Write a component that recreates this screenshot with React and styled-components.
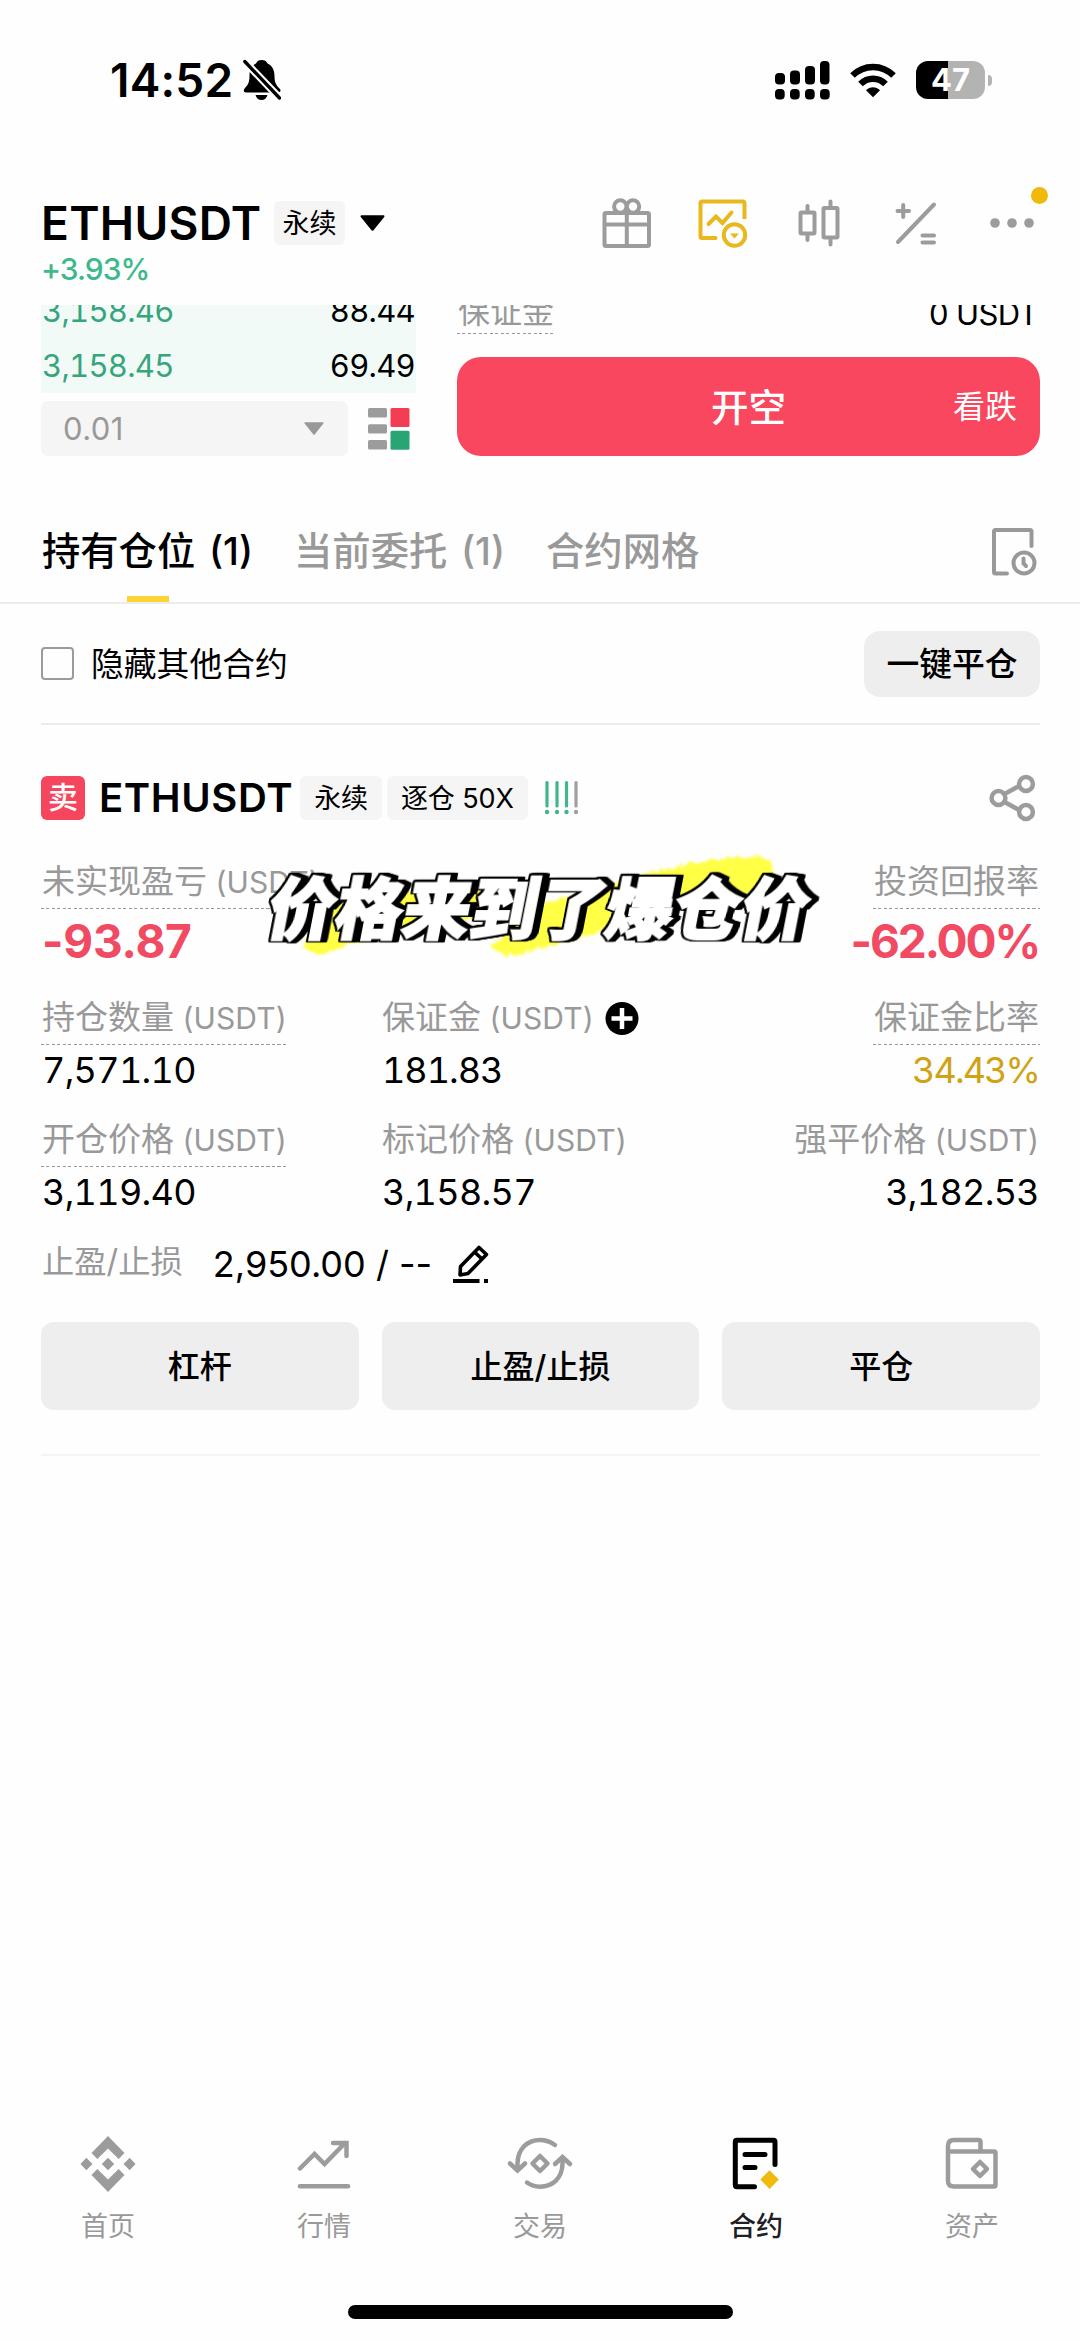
import React from "react";
import styled, { createGlobalStyle } from "styled-components";

const GlobalStyle = createGlobalStyle`
  * { box-sizing: border-box; }
  body {
    margin: 0;
    background: #fefefe;
    color: #000;
    font-family: Inter, "Noto Sans CJK SC", sans-serif;
  }
  svg { display: block; flex: none; }
`;

const colors = {
  gray: "#999999",
  red: "#f6465d",
  gold: "#f0b90b",
  chip: "#f5f5f5",
  button: "#eeeeee",
  line: "#ececec",
};

const Page = styled.div`
  width: 1080px;
  height: 2341px;
  display: flex;
  flex-direction: column;
  overflow: hidden;
`;

const Latin = styled.span`
  font-size: 30px;
  letter-spacing: 0.1px;
  line-height: 1;
`;

/* Status bar */
const StatusBar = styled.div`
  height: 160px;
  padding: 0 88px 0 110px;
  display: flex;
  align-items: center;
  justify-content: space-between;
`;

const StatusGroup = styled.div`
  display: flex;
  align-items: center;
  gap: ${props => props.$gap}px;
`;

const Clock = styled.span`
  font-size: 46px;
  font-weight: 600;
  line-height: 60px;
  letter-spacing: 0.2px;
`;

const Battery = styled.div`
  width: 69px;
  height: 38px;
  border-radius: 12px;
  background: linear-gradient(90deg, #000 47%, #b3b3b3 47%);
  color: #fff;
  font-size: 31px;
  font-weight: 700;
  line-height: 38px;
  text-align: center;
`;

const BatteryCap = styled.div`
  width: 4px;
  height: 11px;
  margin-left: 3px;
  border-radius: 0 5px 5px 0;
  background: #b3b3b3;
`;

/* Header */
const Header = styled.header`
  height: 145px;
  padding: 33px 20px 0 41px;
`;

const HeaderRow = styled.div`
  height: 60px;
  display: flex;
  align-items: center;
`;

const Symbol = styled.h1`
  margin: 0 ${props => props.$gap}px 0 0;
  font-size: ${props => props.$size}px;
  font-weight: 600;
  line-height: 1;
  letter-spacing: ${props => props.$track}px;
`;

const Chip = styled.span`
  height: 44px;
  margin-right: ${props => props.$gap}px;
  padding: 0 ${props => props.$pad || 14}px;
  border-radius: 6px;
  background: ${colors.chip};
  display: flex;
  align-items: center;
  font-size: 27px;
  line-height: 1;
  letter-spacing: -0.1px;
  white-space: pre;
`;

const HeaderIcons = styled.div`
  margin-left: auto;
  display: grid;
  grid-template-columns: repeat(5, 96.3px);
  align-items: center;
  justify-items: center;
`;

const MoreWrap = styled.div`
  position: relative;
`;

const NoticeDot = styled.i`
  position: absolute;
  right: -13px;
  top: -22px;
  width: 17px;
  height: 17px;
  border-radius: 50%;
  background: ${colors.gold};
`;

const Change = styled.div`
  color: #3db98b;
  font-size: 30px;
  font-weight: 500;
  line-height: 33px;
  letter-spacing: -1px;
`;

/* Order area */
const OrderArea = styled.section`
  height: 151px;
  padding: 0 40px 0 41px;
  display: flex;
  gap: 41px;
  overflow: hidden;
`;

const BookColumn = styled.div`
  width: 375px;
`;

const Book = styled.div`
  height: 88px;
  margin-bottom: 8px;
  background: #f2faf7;
  display: flex;
  flex-direction: column;
  justify-content: flex-end;
  overflow: hidden;
`;

const BookRow = styled.div`
  flex: none;
  height: 55px;
  padding: 0 1px;
  display: flex;
  justify-content: space-between;
  align-items: center;
  font-size: 31px;
  font-variant-numeric: tabular-nums;
  line-height: 1;
  letter-spacing: -0.7px;

  span:first-child { color: #35a57b; }
`;

const StepRow = styled.div`
  display: flex;
  align-items: center;
  justify-content: space-between;
  padding-right: 6px;
`;

const StepSelect = styled.div`
  width: 307px;
  height: 55px;
  padding: 0 24px 0 22px;
  border-radius: 7px;
  background: ${colors.chip};
  color: ${colors.gray};
  display: flex;
  align-items: center;
  justify-content: space-between;
  font-size: 31px;
  letter-spacing: 0.4px;
`;

const OrderColumn = styled.div`
  flex: 1;
`;

const MarginRow = styled.div`
  height: 52px;
  padding: 0 2px 23px 0;
  display: flex;
  align-items: flex-end;
  justify-content: space-between;
`;

const Label = styled.span`
  height: ${props => props.$height || 52}px;
  padding: 0 1px 3px;
  display: inline-flex;
  align-items: center;
  color: ${colors.gray};
  font-size: ${props => props.$size || 33}px;
  line-height: 1;
  white-space: pre;
  background: ${props => props.$dotted
    ? "repeating-linear-gradient(90deg, #999 0 3px, transparent 3px 5.5px) left bottom / 100% 1px no-repeat"
    : "none"};
`;

const MarginValue = styled.span`
  font-size: 31px;
  line-height: 41px;
  letter-spacing: -0.6px;
`;

const SellButton = styled.button`
  width: 100%;
  height: 99px;
  padding: 0 23px 5px;
  border: 0;
  border-radius: 24px;
  background: #f8475e;
  color: #fff;
  font-family: inherit;
  display: grid;
  grid-template-columns: 1fr auto 1fr;
  align-items: center;
  font-size: 37.500px;
  font-weight: 500;

  small {
    grid-column: 3;
    justify-self: end;
    font-size: 32px;
    font-weight: 400;
  }
  span { grid-column: 2; }
`;

/* Tabs */
const Tabs = styled.nav`
  height: 148px;
  padding: 65px 43px 0 42px;
  border-bottom: 2px solid ${colors.line};
  display: flex;
  gap: 41px;

  svg { margin: 6px 0 0 auto; }
`;

const Tab = styled.div`
  display: flex;
  flex-direction: column;
  align-items: center;
  color: ${props => props.$active ? "#000" : colors.gray};
  font-size: 38.300px;
  font-weight: 500;
  line-height: 60px;
  word-spacing: 3.5px;
  white-space: pre;

  &::after {
    content: "";
    width: 42px;
    height: 7px;
    margin-top: 15px;
    background: ${props => props.$active ? "#fcd535" : "transparent"};
  }
`;

const FilterRow = styled.div`
  height: 121px;
  margin: 0 40px 0 41px;
  border-bottom: 2px solid ${colors.line};
  display: flex;
  align-items: center;
  font-size: 32.800px;
`;

const FilterText = styled.span`
  padding-bottom: 4px;
`;

const Checkbox = styled.span`
  width: 33px;
  height: 33px;
  margin-right: 17px;
  border: 2px solid #9b9b9b;
  border-radius: 4px;
`;

const CloseAll = styled.button`
  width: 176px;
  height: 66px;
  margin-left: auto;
  padding: 0 0 4px;
  border: 0;
  border-radius: 16px;
  background: ${colors.button};
  color: #000;
  font: inherit;
  font-weight: 500;
`;

/* Position card */
const Position = styled.section`
  margin: 0 40px 0 41px;
  padding: 51px 0 44px;
  border-bottom: 2px solid #f3f5f5;
  position: relative;
`;

const PositionHead = styled.div`
  height: 44px;
  margin-bottom: 37px;
  padding-right: 4px;
  display: flex;
  align-items: center;

  svg:last-child { margin-left: auto; }
`;

const Side = styled.span`
  width: 44px;
  height: 44px;
  margin-right: 14px;
  border-radius: 6px;
  background: ${colors.red};
  color: #fff;
  font-size: 30px;
  font-weight: 500;
  line-height: 42px;
  text-align: center;
`;

const MetricRow = styled.div`
  display: grid;
  grid-template-columns: 340px 1fr auto;
  margin-bottom: 19px;
`;

const Metric = styled.div`
  display: flex;
  flex-direction: column;
  align-items: ${props => props.$end ? "flex-end" : "flex-start"};
`;

const LabelLine = styled.div`
  display: flex;
  align-items: center;
  gap: 10px;
`;

const Value = styled.div`
  padding: 0 1px;
  font-size: 36px;
  font-variant-numeric: tabular-nums;
  line-height: 51px;
  letter-spacing: ${props => props.$track ?? -0.7}px;
  color: ${props => props.$color || "#000"};
`;

const BigValue = styled(Value)`
  font-size: 46px;
  font-weight: 700;
  font-variant-numeric: normal;
  line-height: 65px;
  color: #f04b62;
`;

const StopRow = styled.div`
  height: 92px;
  margin-top: -19px;
  display: flex;
  align-items: center;
`;

const StopValue = styled.span`
  margin: 0 20px 0 29px;
  font-size: 36px;
  line-height: 1;
  white-space: pre;
`;

const Actions = styled.div`
  margin-top: 12px;
  display: grid;
  grid-template-columns: repeat(3, 1fr);
  gap: 23px;
`;

const Action = styled.button`
  height: 88px;
  padding: 0 0 5px;
  border: 0;
  border-radius: 13px;
  background: ${colors.button};
  color: #000;
  font-family: inherit;
  font-size: 32px;
  font-weight: 500;
`;

/* Sticker caption laid over the card */
const Caption = styled.div`
  position: absolute;
  left: 225px;
  top: 120px;
  width: 574px;
  height: 120px;
`;

const Brush = styled.svg`
  position: absolute;
  left: 18px;
  top: 0;
`;

const CaptionText = styled.div`
  position: relative;
  margin-top: 15px;
  padding-left: 4px;
  color: #fff;
  font-family: "Noto Sans CJK SC", sans-serif;
  font-size: 67px;
  font-weight: 900;
  line-height: 90px;
  letter-spacing: 0.6px;
  white-space: nowrap;
  transform: skewX(-11deg);
  -webkit-text-stroke: 2px #fff;
  filter: drop-shadow(1.1px 0 0 #000) drop-shadow(-1.1px 0 0 #000)
    drop-shadow(0 1.1px 0 #000) drop-shadow(0 -1.1px 0 #000)
    drop-shadow(2px 0 0 #000) drop-shadow(4px 0 0 #000);
`;

/* Bottom navigation */
const BottomNav = styled.nav`
  margin-top: auto;
  display: grid;
  grid-template-columns: repeat(5, 1fr);
`;

const NavItem = styled.div`
  display: flex;
  flex-direction: column;
  align-items: center;
  gap: 13px;
  color: ${props => props.$active ? "#1e2026" : colors.gray};
  font-size: 27px;
  font-weight: ${props => props.$active ? 500 : 400};
  line-height: 40px;
`;

const HomeIndicator = styled.div`
  width: 385px;
  height: 14px;
  margin: 58px auto 22px;
  border-radius: 7px;
  background: #000;
`;

const BellOff = () => (
  <svg width="38" height="42" viewBox="0 0 38 42">
    <path fill="#000" d="M18.500 1C21.500 1 23.500 2 24.500 4.500C29.500 6.500 31.500 11.500 31.500 17C31.500 23 33 26 36.500 29.500C38.500 31.500 37.500 33.500 35 33.500H3C.5 33.500 0 31 2 29C5 26 6.500 23 6.500 17C6.500 11.500 8 6.500 13 4.500C14 2 16 1 18.500 1ZM12.500 36H24.500C23.700 39 21.500 41 18.500 41S13.300 39 12.500 36Z" />
    <path d="M-1 -.5L39 41.500" stroke="#fefefe" strokeWidth="7.500" />
    <path d="M1.800 2.500L36.500 39" stroke="#000" strokeWidth="3.300" strokeLinecap="round" />
  </svg>
);

const Signal = () => (
  <svg width="55" height="39" viewBox="0 0 55 39">
    <rect x="0" y="12" width="10" height="11.500" rx="4" />
    <rect x="15" y="9.500" width="10" height="14" rx="4" />
    <rect x="30" y="5" width="10" height="18.500" rx="4" />
    <rect x="45" y="0" width="9.500" height="23.500" rx="4" />
    {[0, 15, 30, 45].map(x => <rect key={x} x={x} y="28" width="9.700" height="10.500" rx="4" />)}
  </svg>
);

const Wifi = () => (
  <svg width="46" height="36" viewBox="0 0 46 36" fill="none" stroke="#000" strokeWidth="6.500">
    <path d="M2.500 13.500C14 2 32 2 43.500 13.500" />
    <path d="M10.500 22C17.500 15 28.500 15 35.500 22" />
    <path d="M16 28.200C20 24.300 26 24.300 30 28.200L23 35.300Z" fill="#000" stroke="none" />
  </svg>
);

const Triangle = ({ width, height, color }) => (
  <svg width={width} height={height} viewBox="0 0 24 15" preserveAspectRatio="none">
    <path d="M1.500 1.200H22.500L12 13.800Z" fill={color} stroke={color} strokeWidth="2" strokeLinejoin="round" />
  </svg>
);

const Gift = () => (
  <svg width="50" height="52" viewBox="0 0 50 52" fill="none" stroke="#9c9c9c" strokeWidth="4">
    <rect x="2.500" y="16" width="44.500" height="33" rx="1.500" />
    <path d="M2.500 27.500H47M24.800 16V49" />
    <circle cx="18.300" cy="9.500" r="6.200" />
    <circle cx="31" cy="9.500" r="6.200" />
  </svg>
);

const ChartCoin = () => (
  <svg width="50" height="50" viewBox="0 0 50 50" fill="none" stroke="#e9b81e" strokeWidth="4" strokeLinecap="round">
    <path d="M46.500 21V5Q46.500 3.500 45 3.500H4Q2.500 3.500 2.500 5V38.500Q2.500 40 4 40H17.500" strokeLinecap="butt" />
    <path d="M17 40H17.500M10.500 26L18 18.500L24.500 25L33.500 14.500" />
    <circle cx="36.500" cy="37" r="10.700" />
    <path d="M32 35.500H41L36.500 40.500Z" fill="#e9b81e" stroke="none" />
  </svg>
);

const Candles = () => (
  <svg width="42" height="48" viewBox="0 0 42 48" fill="none" stroke="#9c9c9c" strokeWidth="4" strokeLinecap="round">
    <rect x="2.500" y="13.500" width="14" height="21" rx="1" />
    <rect x="25.500" y="9" width="14" height="29.500" rx="1" />
    <path d="M9.500 7V13M9.500 35V41M32.500 2.500V9M32.500 39V45.500" />
  </svg>
);

const PlusSlash = () => (
  <svg width="42" height="44" viewBox="0 0 42 44" fill="none" stroke="#9c9c9c" strokeWidth="4" strokeLinecap="round">
    <path d="M3 41L39 3.500M2.500 10H14M8.200 4V16M27.500 34.500H39M27.500 41.500H39" />
  </svg>
);

const Dots = () => (
  <svg width="46" height="28" viewBox="0 0 46 28" fill="#9c9c9c">
    <circle cx="6" cy="14" r="4.800" />
    <circle cx="23" cy="14" r="4.800" />
    <circle cx="40" cy="14" r="4.800" />
  </svg>
);

const BookLayout = () => (
  <svg width="42" height="42" viewBox="0 0 42 42">
    <g fill="#9c9c9c">
      <rect x="0" y="0" width="19" height="9.500" rx="1.500" />
      <rect x="0" y="16.300" width="19" height="9.300" rx="1.500" />
      <rect x="0" y="32" width="19" height="9.500" rx="1.500" />
    </g>
    <rect x="22.500" y="0" width="19" height="19" rx="1.500" fill="#f33d54" />
    <rect x="22.500" y="22.800" width="19" height="19" rx="1.500" fill="#28a575" />
  </svg>
);

const History = () => (
  <svg width="46" height="50" viewBox="0 0 46 50" fill="none" stroke="#999" strokeWidth="4" strokeLinecap="round">
    <path d="M40.500 19V4.500Q40.500 3 39 3H4.500Q3 3 3 4.500V45Q3 46.500 4.500 46.500H16" />
    <circle cx="33" cy="36" r="10.500" />
    <path d="M32.500 31.500V36.500L35 39" />
  </svg>
);

const Risk = () => (
  <svg width="34" height="34" viewBox="0 0 34 34">
    {[2, 12, 21.5, 31].map((x, i) => (
      <g key={x} fill={i < 3 ? "#43b58b" : "#a0a0a0"}>
        <rect x={x - 1.6} y="0" width="3.200" height="26.500" rx="1.500" />
        <circle cx={x} cy="31" r="2.200" />
      </g>
    ))}
  </svg>
);

const Share = () => (
  <svg width="47" height="48" viewBox="0 0 47 48" fill="none" stroke="#9c9c9c" strokeWidth="4.500">
    <path d="M15.500 20L31 11.500M15.500 28L31 36.500" />
    <circle cx="9.500" cy="24" r="6.900" />
    <circle cx="37" cy="10" r="6.900" />
    <circle cx="37" cy="38" r="6.900" />
  </svg>
);

const AddCircle = () => (
  <svg width="34" height="34" viewBox="0 0 34 34">
    <circle cx="17" cy="16.500" r="16.500" />
    <path d="M17 6V27M6.500 16.500H27.500" stroke="#fff" strokeWidth="4.500" />
  </svg>
);

const Edit = () => (
  <svg width="38" height="38" viewBox="0 0 38 38" fill="none" stroke="#000" strokeWidth="3.600" strokeLinejoin="round">
    <path d="M8 30L8.500 21.500L27 2.500L34.500 9.500L16 28.500Z" />
    <path d="M22.500 7L30 14" />
    <path d="M1 36H27.500M32 36H36" strokeWidth="3.800" />
  </svg>
);

const navIcons = {
  home: (
    <svg width="56" height="60" viewBox="0 0 56 60" fill="#9c9c9c">
      <path d="M28 2L44.500 19L38.700 25L28 14.500L17.300 25L11.500 19ZM28 58L44.500 41L38.700 35L28 45.500L17.300 35L11.500 41Z" />
      <path d="M28 23.800L34.200 30L28 36.200L21.800 30ZM6.300 23.800L12.500 30L6.300 36.200L.5 30ZM49.700 23.800L55.500 30L49.700 36.200L43.500 30Z" />
    </svg>
  ),
  market: (
    <svg width="54" height="60" viewBox="0 0 54 60" fill="none" stroke="#9c9c9c" strokeWidth="4.500" strokeLinecap="round">
      <path d="M3 34.500L17.500 20L27.500 30L48 9M36 9H49.500V22" />
      <path d="M3 52.300H51" />
    </svg>
  ),
  trade: (
    <svg width="68" height="60" viewBox="0 0 68 60" fill="none" stroke="#9c9c9c" strokeWidth="4.500" strokeLinecap="round">
      <path d="M11.500 36V29C12 15 21 6 34 6Q42 6 49 11" />
      <path d="M4 29.500L11.500 36.500L19 29.500" />
      <path d="M56.500 24V30C56 44 47 52.700 34 52.700Q27 52.700 21 48.500" />
      <path d="M49 30L56.500 23L64 30" />
      <path d="M34 22L41.500 29.500L34 37L26.500 29.500Z" strokeLinejoin="round" />
    </svg>
  ),
  futures: (
    <svg width="48" height="60" viewBox="0 0 48 60" fill="none" stroke="#000" strokeWidth="5" strokeLinecap="round">
      <path d="M43 30.500V8Q43 6.300 41.300 6.300H5Q3.300 6.300 3.300 8V51Q3.300 52.700 5 52.700H22.500" />
      <path d="M13 20.500H33M13 33.500H23" />
      <path d="M37.500 36.300L46.800 45.500L37.500 55L28.300 45.500Z" fill="#f0b90b" stroke="none" />
    </svg>
  ),
  assets: (
    <svg width="54" height="60" viewBox="0 0 54 60" fill="none" stroke="#9c9c9c" strokeWidth="4.500">
      <path d="M35.500 17V8Q35.500 6 33.500 6H9Q3 6 3 12V47Q3 52.500 9 52.500H49Q50.500 52.500 50.500 51V19Q50.500 17.500 49 17.500H3" />
      <path d="M35 28L42 35L35 42L28 35Z" strokeLinejoin="round" />
    </svg>
  ),
};

const navItems = [
  { icon: "home", text: "首页" },
  { icon: "market", text: "行情" },
  { icon: "trade", text: "交易" },
  { icon: "futures", text: "合约", active: true },
  { icon: "assets", text: "资产" },
];

const Unit = () => <Latin>{" (USDT)"}</Latin>;

export default function App() {
  return (
    <Page>
      <GlobalStyle />
      <StatusBar>
        <StatusGroup $gap={10}>
          <Clock>14:52</Clock>
          <BellOff />
        </StatusGroup>
        <StatusGroup $gap={20}>
          <Signal />
          <Wifi />
          <StatusGroup $gap={0}>
            <Battery>47</Battery>
            <BatteryCap />
          </StatusGroup>
        </StatusGroup>
      </StatusBar>

      <Header>
        <HeaderRow>
          <Symbol $size={46} $track={0.3} $gap={12}>ETHUSDT</Symbol>
          <Chip $pad={9} $gap={15}>永续</Chip>
          <Triangle width={25} height={16} color="#000" />
          <HeaderIcons>
            <Gift />
            <ChartCoin />
            <Candles />
            <PlusSlash />
            <MoreWrap>
              <Dots />
              <NoticeDot />
            </MoreWrap>
          </HeaderIcons>
        </HeaderRow>
        <Change>+3.93%</Change>
      </Header>

      <OrderArea>
        <BookColumn>
          <Book>
            <BookRow><span>3,158.46</span><span>88.44</span></BookRow>
            <BookRow><span>3,158.45</span><span>69.49</span></BookRow>
          </Book>
          <StepRow>
            <StepSelect>
              0.01
              <Triangle width={20} height={13} color="#999" />
            </StepSelect>
            <BookLayout />
          </StepRow>
        </BookColumn>
        <OrderColumn>
          <MarginRow>
            <Label $dotted $size={32} $height={41}>保证金</Label>
            <MarginValue>0 USDT</MarginValue>
          </MarginRow>
          <SellButton>
            <span>开空</span>
            <small>看跌</small>
          </SellButton>
        </OrderColumn>
      </OrderArea>

      <Tabs>
        <Tab $active>持有仓位 (1)</Tab>
        <Tab>当前委托 (1)</Tab>
        <Tab>合约网格</Tab>
        <History />
      </Tabs>

      <FilterRow>
        <Checkbox />
        <FilterText>隐藏其他合约</FilterText>
        <CloseAll>一键平仓</CloseAll>
      </FilterRow>

      <Position>
        <PositionHead>
          <Side>卖</Side>
          <Symbol $size={40} $track={0.6} $gap={7}>ETHUSDT</Symbol>
          <Chip $gap={5}>永续</Chip>
          <Chip $gap={17}>逐仓 50X</Chip>
          <Risk />
          <Share />
        </PositionHead>

        <MetricRow>
          <Metric>
            <Label $dotted>未实现盈亏<Unit /></Label>
            <BigValue $track={-0.2}>-93.87</BigValue>
          </Metric>
          <span />
          <Metric $end>
            <Label $dotted>投资回报率</Label>
            <BigValue $track={-2.1}>-62.00%</BigValue>
          </Metric>
        </MetricRow>
        <MetricRow>
          <Metric>
            <Label $dotted>持仓数量<Unit /></Label>
            <Value>7,571.10</Value>
          </Metric>
          <Metric>
            <LabelLine>
              <Label>保证金<Unit /></Label>
              <AddCircle />
            </LabelLine>
            <Value $track={-1}>181.83</Value>
          </Metric>
          <Metric $end>
            <Label $dotted>保证金比率</Label>
            <Value $color="#d0a215" $track={-1.9}>34.43%</Value>
          </Metric>
        </MetricRow>
        <MetricRow>
          <Metric>
            <Label $dotted>开仓价格<Unit /></Label>
            <Value>3,119.40</Value>
          </Metric>
          <Metric>
            <Label>标记价格<Unit /></Label>
            <Value>3,158.57</Value>
          </Metric>
          <Metric $end>
            <Label>强平价格<Unit /></Label>
            <Value>3,182.53</Value>
          </Metric>
        </MetricRow>

        <StopRow>
          <Label $size={32.3}>止盈/止损</Label>
          <StopValue>2,950.00 / --</StopValue>
          <Edit />
        </StopRow>

        <Actions>
          <Action>杠杆</Action>
          <Action>止盈/止损</Action>
          <Action>平仓</Action>
        </Actions>

        <Caption>
          <Brush width="520" height="116" viewBox="284 845 520 116">
            <filter id="rough">
              <feTurbulence baseFrequency="0.12" numOctaves="2" seed="4" />
              <feDisplacementMap in="SourceGraphic" scale="7" />
              <feGaussianBlur stdDeviation="0.8" />
            </filter>
            <g fill="#ffff45" filter="url(#rough)">
              <path d="M300 945L330 905L400 890L478 885L495 895L490 915L400 925L350 942L316 953Z" />
              <path d="M489 945L530 905L640 873L709 858L757 854L770 860L774 880L760 890L680 905L613 925L570 938L520 952L505 955Z" />
            </g>
          </Brush>
          <CaptionText>价格来到了爆仓价</CaptionText>
        </Caption>
      </Position>

      <BottomNav>
        {navItems.map(item => (
          <NavItem key={item.icon} $active={item.active}>
            {navIcons[item.icon]}
            {item.text}
          </NavItem>
        ))}
      </BottomNav>
      <HomeIndicator />
    </Page>
  );
}
